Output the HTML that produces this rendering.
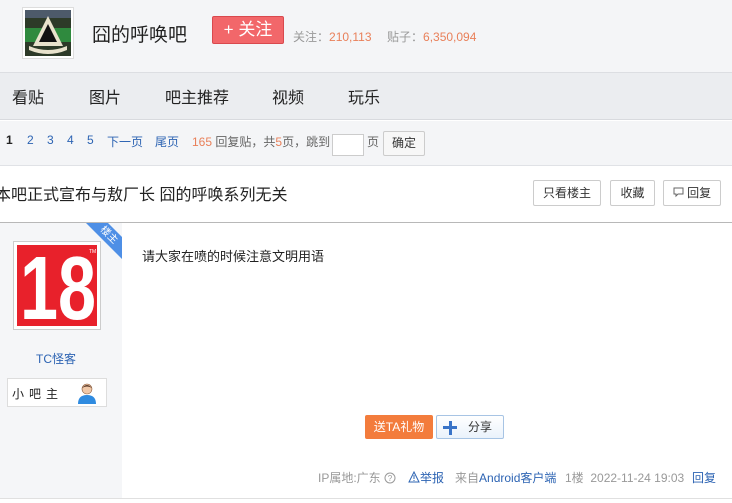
<!DOCTYPE html>
<html><head><meta charset="utf-8">
<style>
*{margin:0;padding:0;box-sizing:border-box}
body{width:732px;height:503px;overflow:hidden;background:#fff;font-family:"Liberation Sans","Noto Sans CJK SC",sans-serif;font-size:12px;color:#333;position:relative}
.abs{position:absolute}
#hd{left:0;top:0;width:732px;height:73px;background:#f4f5f7;border-bottom:1px solid #dcdee2}
#nav{left:0;top:73px;width:732px;height:47px;background:#ebedf0;border-bottom:1px solid #d8dade}
#nav span{position:absolute;top:11px;font-size:16px;color:#222}
#pg{left:0;top:121px;width:732px;height:45px;background:#f4f5f7;border-bottom:1px solid #e0e2e6}
#pg span{position:absolute;top:12px;font-size:12px;color:#2d64b3}
.btn{position:absolute;border:1px solid #ccc;background:#fff;font-size:12px;color:#333;text-align:center;border-radius:2px}
</style></head><body>
<div id="hd" class="abs">
  <div class="abs" style="left:22px;top:7px;width:52px;height:52px;border:1px solid #ddd;background:#fff;padding:2px">
    <svg width="46" height="46" viewBox="0 0 46 46"><rect width="46" height="46" fill="#2d3a28"/><rect x="0" y="18" width="46" height="14" fill="#2f8a3e"/><rect x="0" y="0" width="46" height="8" fill="#4d5a6a"/><polygon points="23,6 38,36 8,36" fill="#e8e2cc"/><polygon points="23,14 32,32 14,32" fill="#111"/><path d="M4 36 Q23 44 42 36 L42 40 Q23 48 4 40Z" fill="#e8e2cc"/></svg>
  </div>
  <div class="abs" style="left:92px;top:20px;font-size:19px;color:#222">囧的呼唤吧</div>
  <div class="abs" style="left:212px;top:16px;width:72px;height:28px;background:#f2676a;border:1px solid #d9494e;border-radius:2px;color:#fff;font-size:17px;line-height:26px;text-align:center">+ 关注</div>
  <div class="abs" style="left:293px;top:28px;color:#999">关注：<span style="color:#e9805a">210,113</span></div>
  <div class="abs" style="left:387px;top:28px;color:#999">贴子：<span style="color:#e9805a">6,350,094</span></div>
</div>
<div id="nav" class="abs">
  <span style="left:12px">看贴</span><span style="left:89px">图片</span><span style="left:165px">吧主推荐</span><span style="left:272px">视频</span><span style="left:348px">玩乐</span>
</div>
<div id="pg" class="abs">
  <span style="left:6px;color:#222;font-weight:bold">1</span>
  <span style="left:27px">2</span><span style="left:47px">3</span><span style="left:67px">4</span><span style="left:87px">5</span>
  <span style="left:107px">下一页</span><span style="left:155px">尾页</span>
  <span style="left:192px;color:#666"><b style="color:#e9805a;font-weight:normal">165</b> 回复贴，共<b style="color:#e9805a;font-weight:normal">5</b>页，跳到</span>
  <div class="abs" style="left:332px;top:13px;width:32px;height:22px;background:#fff;border:1px solid #ccc"></div>
  <span style="left:367px;color:#666">页</span>
  <div class="btn" style="left:383px;top:10px;width:42px;height:25px;line-height:23px;background:#f7f7f7">确定</div>
</div>
<div class="abs" style="left:0;top:181px;font-size:16px;color:#222;white-space:nowrap;margin-left:-5px">本吧正式宣布与敖厂长 囧的呼唤系列无关</div>
<div class="btn" style="left:533px;top:180px;width:68px;height:26px;line-height:24px">只看楼主</div>
<div class="btn" style="left:610px;top:180px;width:45px;height:26px;line-height:24px">收藏</div>
<div class="btn" style="left:663px;top:180px;width:58px;height:26px;line-height:24px"><svg width="11" height="11" viewBox="0 0 11 11" style="vertical-align:-1px"><path d="M1 1h9v6H5l-2 2V7H1z" fill="none" stroke="#666"/></svg> 回复</div>
<div class="abs" style="left:0;top:222px;width:732px;height:1px;background:#b8b8b8"></div>
<div class="abs" style="left:0;top:223px;width:122px;height:275px;background:#f5f6f8"></div>
<svg class="abs" style="left:86px;top:223px" width="36" height="36"><polygon points="0,0 22,0 36,14 36,36" fill="#4e8fe6"/><text x="23" y="15" fill="#fff" font-size="10" transform="rotate(45 23 12)" text-anchor="middle" font-family="Noto Sans CJK SC,sans-serif">楼主</text></svg>
<div class="abs" style="left:13px;top:241px;width:88px;height:89px;border:1px solid #ccc;background:#fff;padding:3px">
  <svg width="80" height="81" viewBox="0 0 80 81" style="display:block"><rect width="80" height="81" fill="#e8212b"/><text x="3" y="74" font-family="Liberation Sans,sans-serif" font-weight="bold" font-size="90" fill="#fff" textLength="76" lengthAdjust="spacingAndGlyphs">18</text><text x="72" y="8" font-size="5" fill="#fff">TM</text></svg>
</div>
<div class="abs" style="left:36px;top:350px;color:#2d64b3">TC怪客</div>
<div class="abs" style="left:7px;top:378px;width:100px;height:29px;background:#fff;border:1px solid #ddd">
  <span class="abs" style="left:4px;top:6px;font-size:12px;color:#222;letter-spacing:5px">小吧主</span>
  <svg class="abs" style="left:68px;top:3px" width="22" height="22" viewBox="0 0 22 22"><circle cx="11" cy="7" r="5" fill="#f0c8a8" stroke="#8a5a3a" stroke-width=".6"/><path d="M6 6 Q11 0 16 6 Q11 3 6 6Z" fill="#5a3a2a"/><path d="M2 22 Q2 13 11 13 Q20 13 20 22Z" fill="#2f8be0"/></svg>
</div>
<div class="abs" style="left:142px;top:246px;font-size:13px;color:#222">请大家在喷的时候注意文明用语</div>
<div class="abs" style="left:365px;top:415px;width:68px;height:24px;background:#f37c3c;border-radius:2px;color:#fff;line-height:24px;text-align:center">送TA礼物</div>
<div class="abs" style="left:436px;top:415px;width:68px;height:24px;border:1px solid #a7c4e4;background:linear-gradient(#fff,#eaf2fb);border-radius:2px;line-height:22px;color:#333">
  <svg class="abs" style="left:6px;top:5px" width="14" height="14"><rect x="6" y="0" width="3" height="14" fill="#3a74c8"/><rect x="0" y="5" width="14" height="3" fill="#3a74c8"/></svg>
  <span class="abs" style="left:31px;top:0">分享</span>
</div>
<div class="abs" style="left:318px;top:469px;color:#999;white-space:nowrap">IP属地:广东 <svg width="12" height="12" style="vertical-align:-2px"><circle cx="6" cy="6" r="5" fill="none" stroke="#999"/><text x="6" y="9" font-size="8" text-anchor="middle" fill="#999">?</text></svg></div>
<div class="abs" style="left:408px;top:469px;color:#2d64b3;white-space:nowrap"><svg width="12" height="12" style="vertical-align:-1px"><path d="M6 1L11 11H1Z" fill="none" stroke="#2d64b3"/><path d="M6 4v4M6 9v1" stroke="#2d64b3"/></svg>举报</div>
<div class="abs" style="left:455px;top:469px;color:#999;white-space:nowrap">来自<span style="color:#2d64b3">Android客户端</span></div>
<div class="abs" style="left:565px;top:469px;color:#999;white-space:nowrap">1楼&nbsp;&nbsp;2022-11-24 19:03</div>
<div class="abs" style="left:692px;top:469px;color:#2d64b3">回复</div>
<div class="abs" style="left:0;top:498px;width:732px;height:1px;background:#e0e0e0"></div>
</body></html>
